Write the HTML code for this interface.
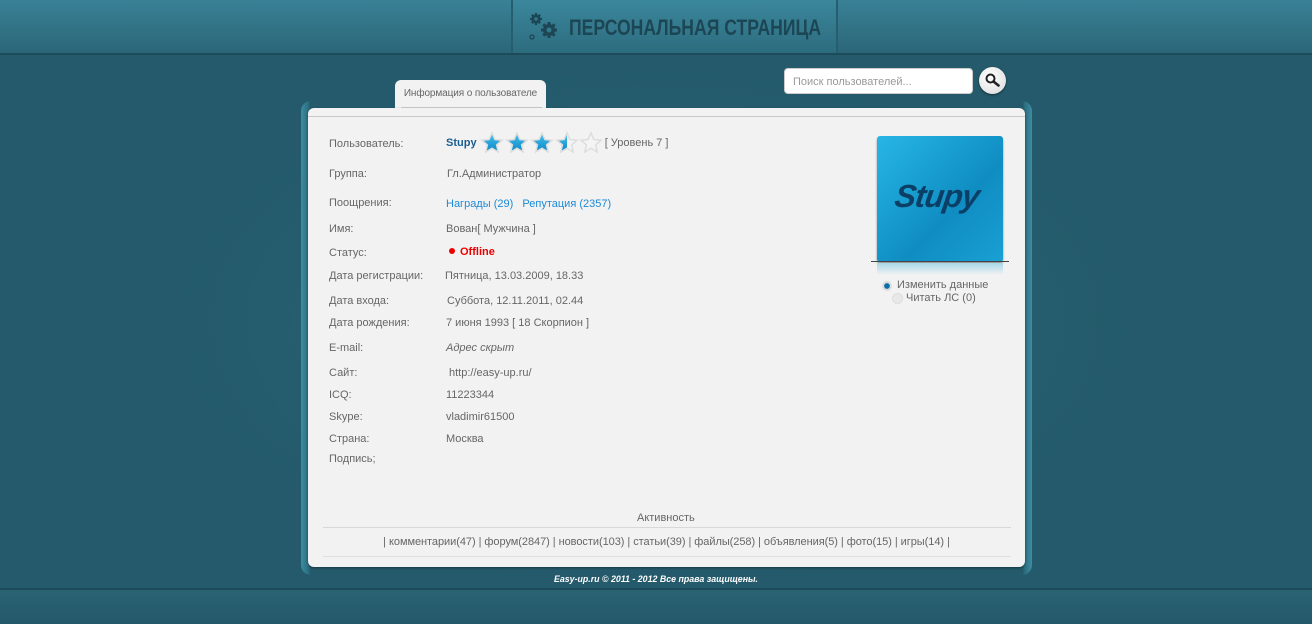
<!DOCTYPE html>
<html><head><meta charset="utf-8"><style>
*{margin:0;padding:0;box-sizing:border-box}
body{width:1312px;height:624px;overflow:hidden;background:#245a6b;font-family:"Liberation Sans",sans-serif;position:relative}
.top{position:absolute;left:0;top:0;width:1312px;height:55px;background:linear-gradient(#3a8196,#2b6678);border-bottom:2px solid #1d4b59}
.head{position:absolute;left:511px;top:0;width:327px;height:53px;border-left:2px solid #255e6e;border-right:2px solid #255e6e;background:linear-gradient(#3b879c,#2d6c7f)}
.head .t{position:absolute;left:56px;top:15px;font:bold 22px "Liberation Sans",sans-serif;color:#1c4654;white-space:nowrap;transform:scaleX(.8);transform-origin:left}
.glow{position:absolute;left:150px;top:55px;width:1010px;height:533px;background:radial-gradient(ellipse at center,#2a6678 0%,#245a6b 70%)}
.bot{position:absolute;left:0;top:588px;width:1312px;height:36px;background:linear-gradient(#2a6373,#23586a);border-top:2px solid #1d4b59}
.frame{position:absolute;left:301px;top:101px;width:731px;height:474px;border-radius:10px;background:linear-gradient(90deg,#3d8da3 0,#2a6a7c 8px,transparent 9px,transparent 722px,#2a6a7c 723px,#3d8da3 731px)}
.panel{position:absolute;left:308px;top:108px;width:717px;height:459px;background:#f2f2f2;border-radius:6px;box-shadow:0 1px 2px rgba(0,0,0,.4)}
.panel:before{content:"";position:absolute;left:0;right:0;top:8px;border-top:1px solid #c8c8c8}
.tab{position:absolute;left:395px;top:80px;width:151px;height:30px;background:#f2f2f2;border-radius:6px 6px 0 0;font-size:10px;color:#666;text-align:center;padding-top:8px;letter-spacing:-.1px}
.tab:after{content:"";position:absolute;left:6px;right:4px;top:27px;border-top:1px solid #ccc}
.search{position:absolute;left:784px;top:68px;width:189px;height:26px;background:#fff;border-radius:4px;border:1px solid #ccc;font-size:11px;color:#999;padding:7px 8px}
.sbtn{position:absolute;left:979px;top:67px;width:27px;height:27px;border-radius:50%;background:radial-gradient(circle at 40% 35%,#fff,#d8d8d8);box-shadow:0 1px 2px rgba(0,0,0,.5)}
.l,.v{position:absolute;font-size:11px;color:#666;white-space:nowrap}
.l{left:329px}
.v{left:446px}
.blue{color:#1e8ad6}
.star{display:inline-block;vertical-align:middle}
.ava{position:absolute;left:877px;top:136px;width:126px;height:126px;border-radius:3px;background:linear-gradient(135deg,#27b6e6,#0f8dc2 60%,#1aa0d3);box-shadow:0 2px 2px rgba(0,0,0,.4);overflow:hidden}
.ava span{position:absolute;left:18px;top:42px;font:italic bold 32px "Liberation Sans",sans-serif;color:#0b3f66;letter-spacing:-1px;transform:skewX(-8deg)}
.refl{position:absolute;left:877px;top:263px;width:126px;height:12px;background:linear-gradient(#a9d8e8,#f2f2f2)}
.act{position:absolute;left:637px;top:512px;font-size:11px;color:#666}
.line{position:absolute;left:323px;width:688px;border-top:1px solid #e0e0e0}
.links{position:absolute;left:308px;width:717px;top:536px;text-align:center;font-size:11px;color:#666;letter-spacing:-.05px}
.foot{position:absolute;left:0;width:1312px;top:574px;text-align:center;font:italic bold 9px "Liberation Sans",sans-serif;color:#fff;transform:scaleX(.98)}
</style></head><body>
<div class="top"></div>
<div class="glow"></div>
<div class="head">
<svg style="position:absolute;left:15px;top:12px" width="34" height="30" viewBox="0 0 34 30"><g fill="#1c4654"><circle cx="8" cy="7" r="4.5"/><g stroke="#1c4654" stroke-width="2.2"><path d="M8 1v12M2 7h12M3.8 2.8l8.4 8.4M12.2 2.8l-8.4 8.4"/></g><circle cx="21" cy="18" r="6"/><g stroke="#1c4654" stroke-width="3"><path d="M21 10v16M13 18h16M15.3 12.3l11.4 11.4M26.7 12.3L15.3 23.7"/></g></g><circle cx="8" cy="7" r="1.7" fill="#33788c"/><circle cx="21" cy="18" r="2.5" fill="#33788c"/><circle cx="4" cy="25" r="2" fill="none" stroke="#1c4654" stroke-width="1.3"/></svg>
<div class="t">ПЕРСОНАЛЬНАЯ СТРАНИЦА</div></div>
<div class="bot"></div>
<div class="search">Поиск пользователей...</div>
<div class="sbtn"><svg width="27" height="27" viewBox="0 0 27 27"><circle cx="11.5" cy="11.5" r="4" fill="none" stroke="#222" stroke-width="2"/><path d="M14.5 14.5l5 4" stroke="#222" stroke-width="2.6" stroke-linecap="round"/></svg></div>
<div class="frame"></div>
<div class="tab">Информация о пользователе</div>
<div class="panel"></div>

<div class="l" style="top:138px">Пользователь:</div>
<div class="v" style="top:131px"><b style="color:#1c5d8f;vertical-align:middle">Stupy</b>
<svg class="star" width="122" height="24" viewBox="0 0 122 24"><defs><linearGradient id="g" x1="0" y1="0" x2="0" y2="1"><stop offset="0" stop-color="#47c2f0"/><stop offset="1" stop-color="#0a86c4"/></linearGradient><clipPath id="h"><rect x="75" y="0" width="12" height="24"/></clipPath></defs>
<g stroke="#ddd" stroke-width="1.5"><path id="s" d="M12 2l2.9 6.6 7.1.6-5.4 4.7 1.6 7-6.2-3.7-6.2 3.7 1.6-7L2 9.2l7.1-.6z" fill="url(#g)"/><use href="#s" x="25"/><use href="#s" x="50"/><path d="M87 2l2.9 6.6 7.1.6-5.4 4.7 1.6 7-6.2-3.7-6.2 3.7 1.6-7L77 9.2l7.1-.6z" fill="#f4f4f4"/><path d="M87 2l2.9 6.6 7.1.6-5.4 4.7 1.6 7-6.2-3.7-6.2 3.7 1.6-7L77 9.2l7.1-.6z" fill="url(#g)" clip-path="url(#h)"/><path d="M112 2l2.9 6.6 7.1.6-5.4 4.7 1.6 7-6.2-3.7-6.2 3.7 1.6-7L102 9.2l7.1-.6z" fill="#f4f4f4" transform="translate(-1 0)"/></g></svg>
<span style="vertical-align:middle">[ Уровень 7 ]</span></div>
<div class="l" style="top:168px">Группа:</div><div class="v" style="top:168px;left:447px">Гл.Администратор</div>
<div class="l" style="top:197px">Поощрения:</div><div class="v blue" style="top:198px">Награды (29) &nbsp; Репутация (2357)</div>
<div class="l" style="top:223px">Имя:</div><div class="v" style="top:223px">Вован[ Мужчина ]</div>
<div class="l" style="top:247px">Статус:</div><div class="v" style="top:246px;color:#e00;font-weight:bold"><span style="display:inline-block;width:6px;height:6px;border-radius:50%;background:#e00;margin:0 5px 1px 3px"></span>Offline</div>
<div class="l" style="top:270px">Дата регистрации:</div><div class="v" style="top:270px;left:445px">Пятница, 13.03.2009, 18.33</div>
<div class="l" style="top:295px">Дата входа:</div><div class="v" style="top:295px;left:447px">Суббота, 12.11.2011, 02.44</div>
<div class="l" style="top:317px">Дата рождения:</div><div class="v" style="top:317px">7 июня 1993 [ 18 Скорпион ]</div>
<div class="l" style="top:342px">E-mail:</div><div class="v" style="top:342px;font-style:italic">Адрес скрыт</div>
<div class="l" style="top:367px">Сайт:</div><div class="v" style="top:367px;left:449px">http://easy-up.ru/</div>
<div class="l" style="top:389px">ICQ:</div><div class="v" style="top:389px">11223344</div>
<div class="l" style="top:411px">Skype:</div><div class="v" style="top:411px">vladimir61500</div>
<div class="l" style="top:433px">Страна:</div><div class="v" style="top:433px">Москва</div>
<div class="l" style="top:453px">Подпись;</div>

<div class="ava"><span>Stupy</span></div>
<div style="position:absolute;left:871px;top:261px;width:138px;border-top:1px solid #444"></div>
<div class="refl"></div>
<div style="position:absolute;left:882px;top:281px;width:10px;height:10px;border-radius:50%;background:radial-gradient(#0a6fa8 35%,#ddd 45%)"></div>
<div class="l" style="left:897px;top:279px">Изменить данные</div>
<div style="position:absolute;left:892px;top:293px;width:11px;height:11px;border-radius:50%;background:#e8e8e8;border:1px solid #ddd"></div>
<div class="l" style="left:906px;top:292px">Читать ЛС (0)</div>

<div class="act">Активность</div>
<div class="line" style="top:527px;border-color:#d8d8d8"></div>
<div class="links">| комментарии(47) | форум(2847) | новости(103) | статьи(39) | файлы(258) | объявления(5) | фото(15) | игры(14) |</div>
<div class="line" style="top:556px"></div>
<div class="foot">Easy-up.ru © 2011 - 2012 Все права защищены.</div>
</body></html>
